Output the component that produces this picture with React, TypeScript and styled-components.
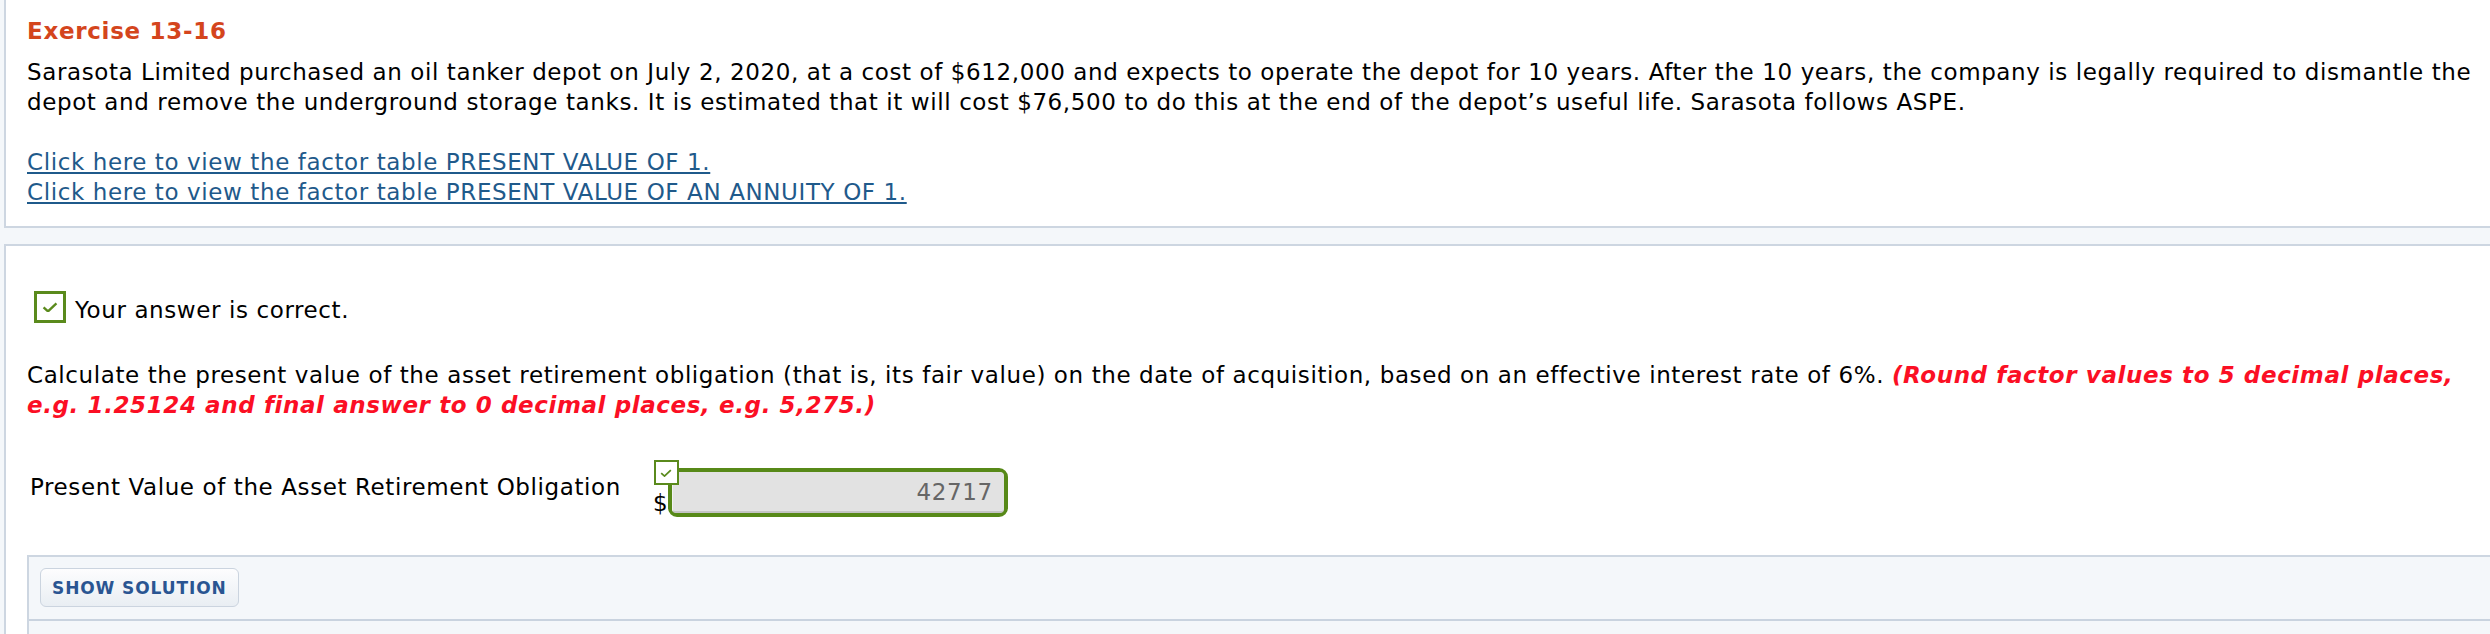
import React from "react";
import styled, { createGlobalStyle } from "styled-components";

const GlobalStyle = createGlobalStyle`
  html, body {
    margin: 0;
    padding: 0;
    background: #f4f7fa;
    overflow: hidden;
  }
  body {
    font-family: "DejaVu Sans", Verdana, sans-serif;
    font-size: 23px;
    line-height: 30px;
    letter-spacing: 0.6px;
    color: #000;
  }
`;

const Page = styled.div`
  padding-left: 4px;
`;

const ExercisePanel = styled.section`
  background: #fff;
  border-left: 2px solid #cdd6e1;
  border-bottom: 2px solid #cdd6e1;
  padding: 16px 10px 19px 21px;
`;

const Title = styled.h2`
  margin: 0;
  font-size: 23px;
  line-height: 30px;
  font-weight: bold;
  letter-spacing: 0.7px;
  color: #d4451d;
`;

const Text = styled.p`
  margin: 11px 0 0 0;
`;

const Links = styled.div`
  margin-top: 30px;
`;

const FactorLink = styled.a`
  display: table;
  color: #1f5a8b;
  text-decoration: underline;
  cursor: pointer;
`;

const QuestionPanel = styled.section`
  margin-top: 16px;
  background: #fff;
  border-left: 2px solid #cdd6e1;
  border-top: 2px solid #cdd6e1;
  padding: 45px 10px 0 21px;
`;

const Status = styled.div`
  display: flex;
  align-items: center;
  gap: 9px;
  padding-left: 7px;
  height: 32px;
`;

const CheckBox = styled.span<{ $size: number }>`
  box-sizing: border-box;
  display: inline-flex;
  align-items: center;
  justify-content: center;
  width: ${(p) => p.$size}px;
  height: ${(p) => p.$size}px;
  border: ${(p) => (p.$size > 28 ? 3 : 2.5)}px solid #5a8a1c;
  background: #fff;
`;

const StatusText = styled.span`
  padding-top: 5px;
`;

const Question = styled.p`
  margin: 37px 0 0 0;
`;

const Hint = styled.em`
  color: #fb0f24;
  font-weight: bold;
  font-style: oblique;
`;

const AnswerRow = styled.div`
  display: flex;
  align-items: center;
  margin-top: 48px;
`;

const Label = styled.div`
  width: 623px;
  padding-left: 3px;
  padding-bottom: 12px;
`;

const Field = styled.div`
  display: flex;
  align-items: flex-end;
`;

const Dollar = styled.span`
  line-height: 24px;
  padding-bottom: 2px;
  letter-spacing: 0;
`;

const InputWrap = styled.div`
  position: relative;
  box-sizing: border-box;
  width: 340px;
  height: 49px;
  border: 4px solid #578918;
  border-radius: 9px;
  background: #e2e2e2;
  display: flex;
`;

const AnswerInput = styled.input`
  flex: 1;
  min-width: 0;
  border: none;
  border-left: 1px solid #f2f2f2;
  border-bottom: 2px solid #c4c4c4;
  border-radius: 4px;
  background: #e2e2e2;
  font-family: "DejaVu Sans", Verdana, sans-serif;
  font-size: 23px;
  letter-spacing: 0.6px;
  color: #666;
  text-align: right;
  padding: 0 11px 0 0;
  outline: none;
`;

const FieldMark = styled.div`
  position: absolute;
  left: -18px;
  top: -18px;
`;

const SolutionBox = styled.div`
  margin: 38px -10px 0 0;
  background: #f4f7fa;
  border-left: 2px solid #cdd6e1;
  border-top: 2px solid #cdd6e1;
`;

const SolutionBar = styled.div`
  padding: 11px 11px 12px 11px;
  border-bottom: 2px solid #c9d3df;
`;

const SolutionButton = styled.button`
  box-sizing: border-box;
  height: 39px;
  padding: 0 11px;
  border: 1px solid #cbd4df;
  border-radius: 6px;
  background: linear-gradient(#fdfdfe, #e9eef3);
  color: #2a5592;
  font-family: "DejaVu Sans", Verdana, sans-serif;
  font-weight: bold;
  font-size: 17px;
  letter-spacing: 0.9px;
  cursor: pointer;
`;

const SolutionBody = styled.div`
  height: 80px;
`;

const Check = ({ w }: { w: number }) => (
  <svg width={w} height={w * 0.68} viewBox="0 0 16 11" fill="none">
    <path d="M1.5 5.5 L6 9.5 L14.5 1.5" stroke="#5a8a1c" strokeWidth="2.4" />
  </svg>
);

export default function App() {
  return (
    <Page>
      <GlobalStyle />
      <ExercisePanel>
        <Title>Exercise 13-16</Title>
        <Text>
          Sarasota Limited purchased an oil tanker depot on July 2, 2020, at a cost of $612,000 and
          expects to operate the depot for 10 years. After the 10 years, the company is legally
          required to dismantle the depot and remove the underground storage tanks. It is estimated
          that it will cost $76,500 to do this at the end of the depot’s useful life. Sarasota
          follows ASPE.
        </Text>
        <Links>
          <FactorLink>Click here to view the factor table PRESENT VALUE OF 1.</FactorLink>
          <FactorLink>Click here to view the factor table PRESENT VALUE OF AN ANNUITY OF 1.</FactorLink>
        </Links>
      </ExercisePanel>

      <QuestionPanel>
        <Status>
          <CheckBox $size={32}>
            <Check w={16} />
          </CheckBox>
          <StatusText>Your answer is correct.</StatusText>
        </Status>

        <Question>
          Calculate the present value of the asset retirement obligation (that is, its fair value) on
          the date of acquisition, based on an effective interest rate of 6%.{" "}
          <Hint>
            (Round factor values to 5 decimal places, e.g. 1.25124 and final answer to 0 decimal
            places, e.g. 5,275.)
          </Hint>
        </Question>

        <AnswerRow>
          <Label>Present Value of the Asset Retirement Obligation</Label>
          <Field>
            <Dollar>$</Dollar>
            <InputWrap>
              <FieldMark>
                <CheckBox $size={25}>
                  <Check w={12} />
                </CheckBox>
              </FieldMark>
              <AnswerInput defaultValue="42717" readOnly />
            </InputWrap>
          </Field>
        </AnswerRow>

        <SolutionBox>
          <SolutionBar>
            <SolutionButton>SHOW SOLUTION</SolutionButton>
          </SolutionBar>
          <SolutionBody />
        </SolutionBox>
      </QuestionPanel>
    </Page>
  );
}
